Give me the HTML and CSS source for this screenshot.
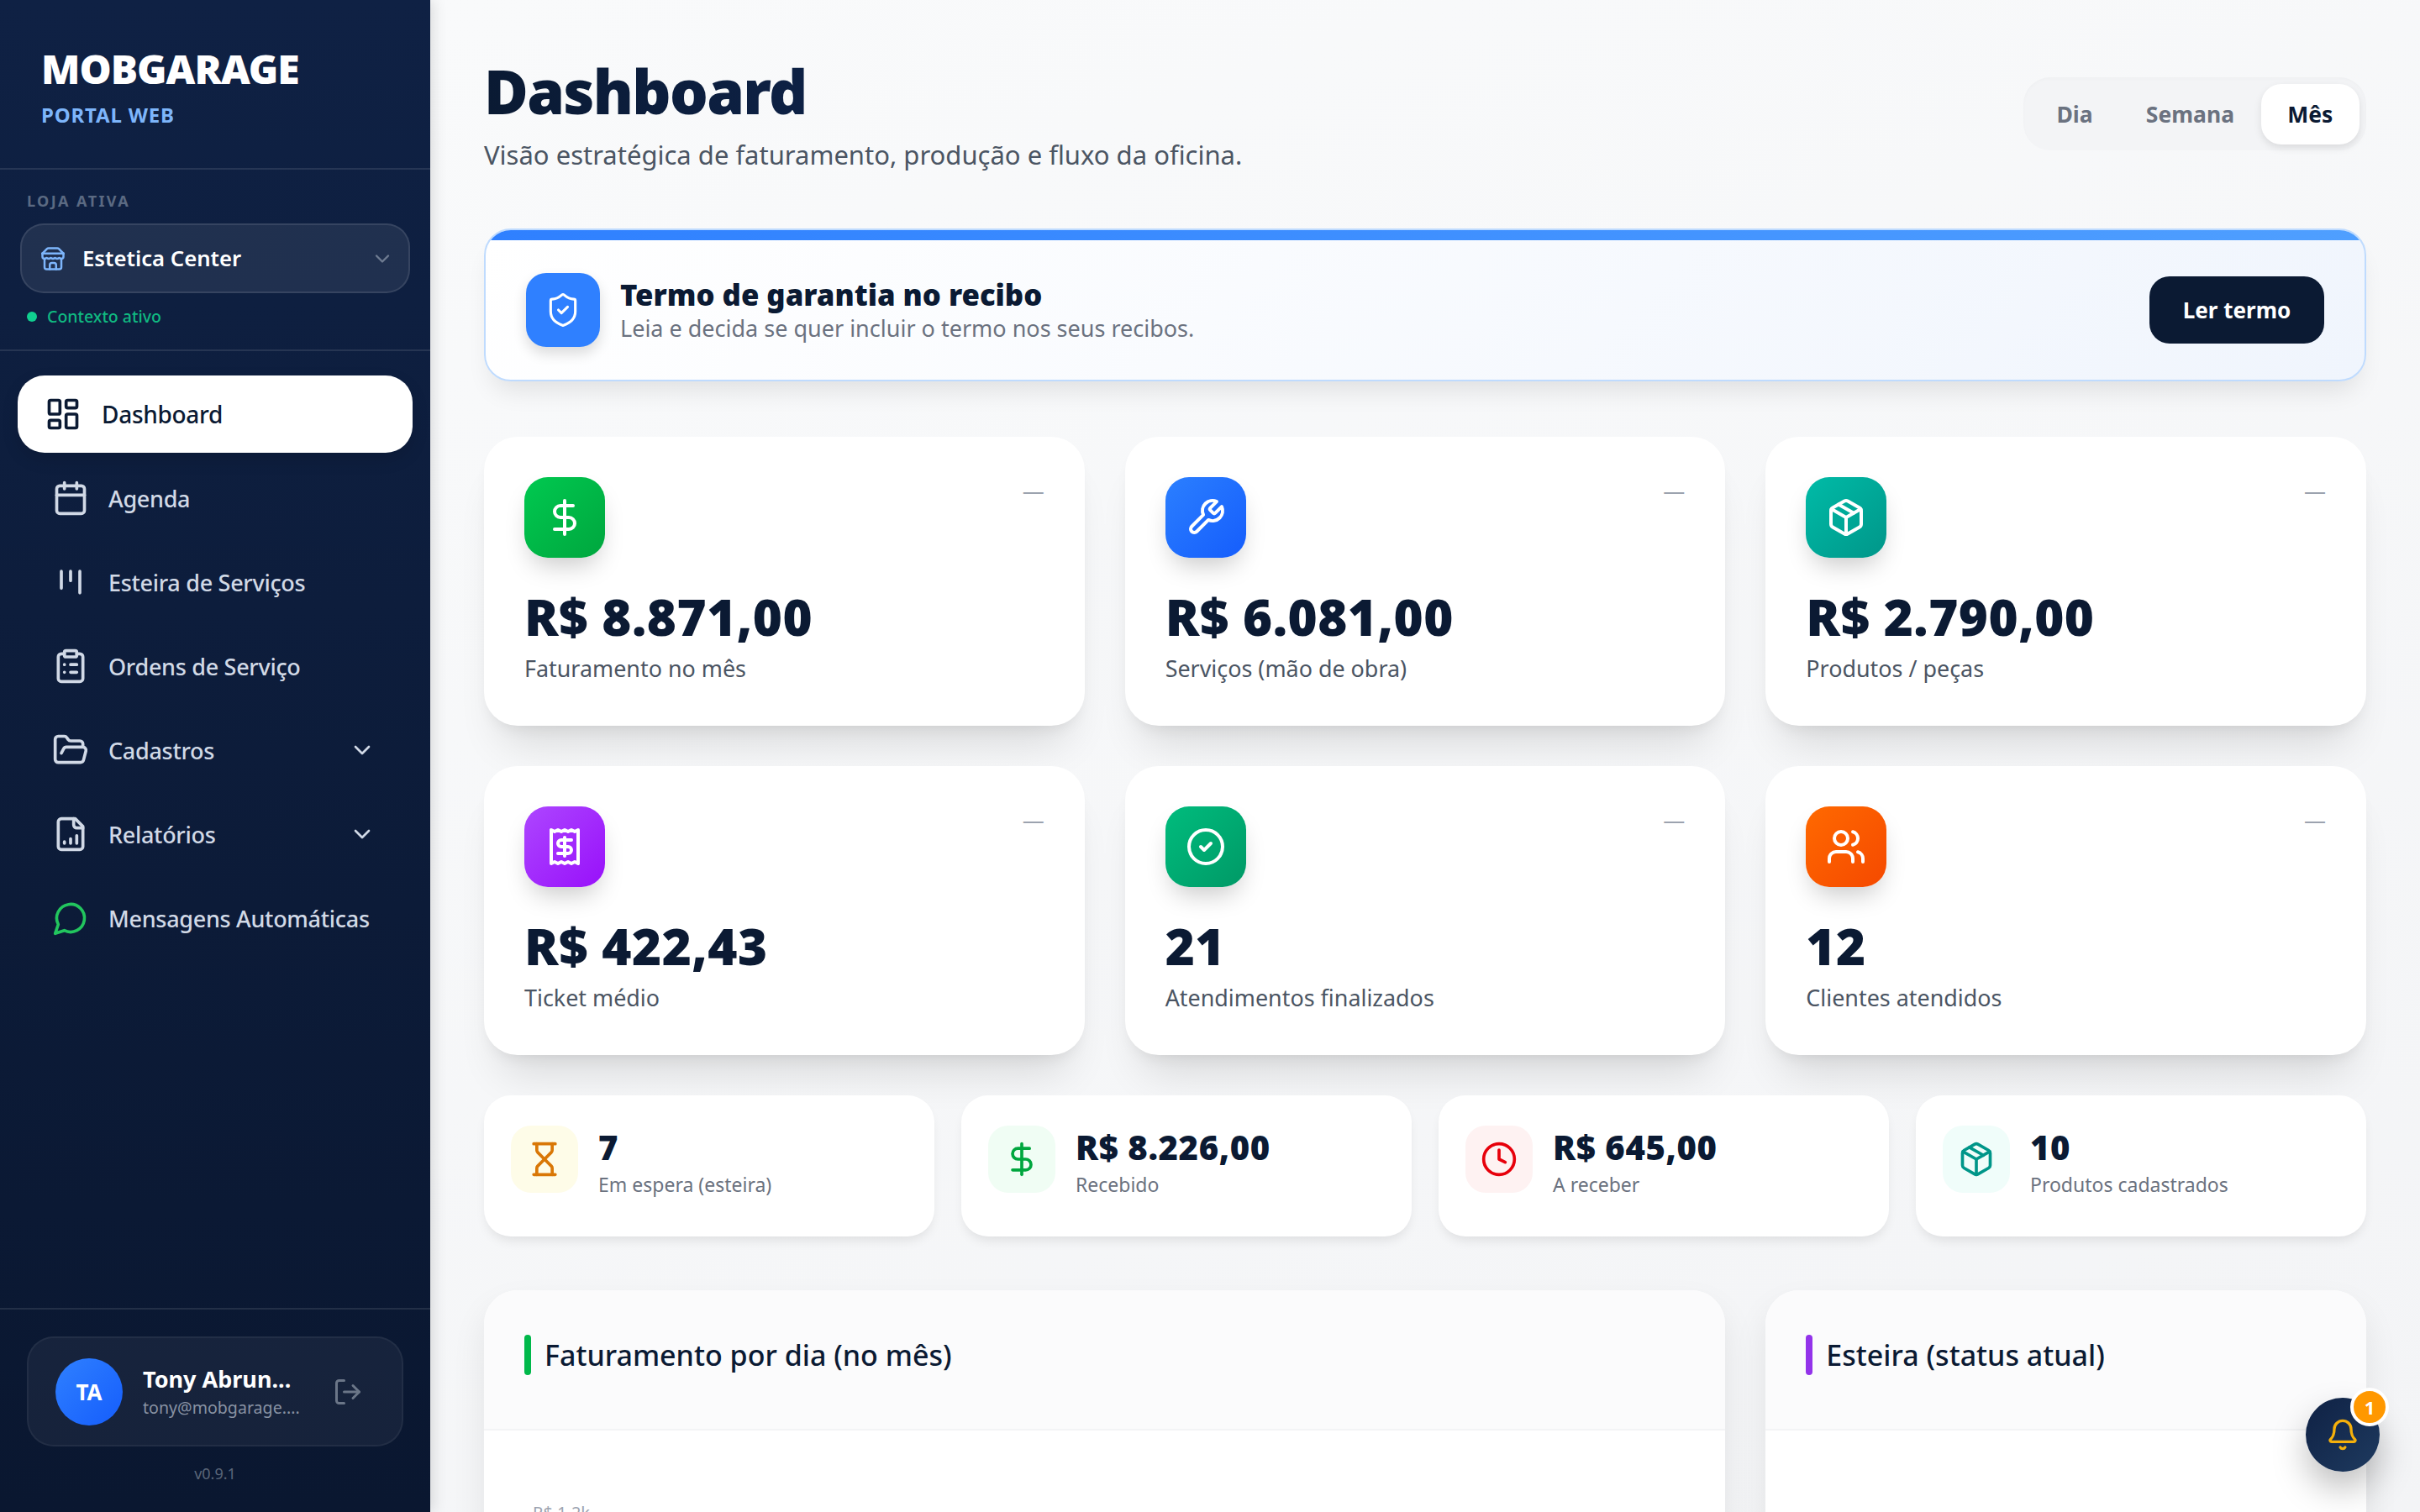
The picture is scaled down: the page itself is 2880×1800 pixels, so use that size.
FILE: index.html
```html
<!DOCTYPE html>
<html lang="pt-BR">
<head>
<meta charset="utf-8">
<title>MobGarage</title>
<link rel="stylesheet" href="styles.css">
</head>
<body>
<svg class="defs" width="0" height="0" aria-hidden="true">
  <symbol id="i-dashboard" viewBox="0 0 24 24"><rect x="3" y="3" width="7" height="9" rx="1"/><rect x="14" y="3" width="7" height="5" rx="1"/><rect x="14" y="12" width="7" height="9" rx="1"/><rect x="3" y="16" width="7" height="5" rx="1"/></symbol>
  <symbol id="i-calendar" viewBox="0 0 24 24"><path d="M8 2v4M16 2v4"/><rect x="3" y="4" width="18" height="18" rx="2"/><path d="M3 10h18"/></symbol>
  <symbol id="i-kanban" viewBox="0 0 24 24"><path d="M6 5v11M12 5v6M18 5v14"/></symbol>
  <symbol id="i-clipboard" viewBox="0 0 24 24"><rect x="8" y="2" width="8" height="4" rx="1"/><path d="M16 4h2a2 2 0 0 1 2 2v14a2 2 0 0 1-2 2H6a2 2 0 0 1-2-2V6a2 2 0 0 1 2-2h2"/><path d="M12 11h4M12 16h4M8 11h.01M8 16h.01"/></symbol>
  <symbol id="i-folder" viewBox="0 0 24 24"><path d="m6 14 1.5-2.9A2 2 0 0 1 9.24 10H20a2 2 0 0 1 1.94 2.5l-1.54 6a2 2 0 0 1-1.95 1.5H4a2 2 0 0 1-2-2V5a2 2 0 0 1 2-2h3.9a2 2 0 0 1 1.69.9l.81 1.2a2 2 0 0 0 1.67.9H18a2 2 0 0 1 2 2v2"/></symbol>
  <symbol id="i-report" viewBox="0 0 24 24"><path d="M15 2H6a2 2 0 0 0-2 2v16a2 2 0 0 0 2 2h12a2 2 0 0 0 2-2V7Z"/><path d="M14 2v4a2 2 0 0 0 2 2h4"/><path d="M8 18v-1M12 18v-3M16 18v-5"/></symbol>
  <symbol id="i-message" viewBox="0 0 24 24"><path d="M7.9 20A9 9 0 1 0 4 16.1L2 22Z"/></symbol>
  <symbol id="i-chevron" viewBox="0 0 24 24"><path d="m6 9 6 6 6-6"/></symbol>
  <symbol id="i-store" viewBox="0 0 24 24"><path d="m2 7 4.41-4.41A2 2 0 0 1 7.83 2h8.34a2 2 0 0 1 1.42.59L22 7"/><path d="M4 12v8a2 2 0 0 0 2 2h12a2 2 0 0 0 2-2v-8"/><path d="M15 22v-4a2 2 0 0 0-2-2h-2a2 2 0 0 0-2 2v4"/><path d="M2 7h20"/><path d="M22 7v3a2 2 0 0 1-2 2 2.7 2.7 0 0 1-1.59-.63.7.7 0 0 0-.82 0A2.7 2.7 0 0 1 16 12a2.7 2.7 0 0 1-1.59-.63.7.7 0 0 0-.82 0A2.7 2.7 0 0 1 12 12a2.7 2.7 0 0 1-1.59-.63.7.7 0 0 0-.82 0A2.7 2.7 0 0 1 8 12a2.7 2.7 0 0 1-1.59-.63.7.7 0 0 0-.82 0A2.7 2.7 0 0 1 4 12a2 2 0 0 1-2-2V7"/></symbol>
  <symbol id="i-logout" viewBox="0 0 24 24"><path d="M9 21H5a2 2 0 0 1-2-2V5a2 2 0 0 1 2-2h4"/><path d="m16 17 5-5-5-5"/><path d="M21 12H9"/></symbol>
  <symbol id="i-shield" viewBox="0 0 24 24"><path d="M20 13c0 5-3.5 7.5-7.66 8.95a1 1 0 0 1-.67-.01C7.5 20.5 4 18 4 13V6a1 1 0 0 1 1-1c2 0 4.5-1.2 6.24-2.72a1.17 1.17 0 0 1 1.52 0C14.51 3.81 17 5 19 5a1 1 0 0 1 1 1z"/><path d="m9 12 2 2 4-4"/></symbol>
  <symbol id="i-dollar" viewBox="0 0 24 24"><path d="M12 2v20"/><path d="M17 5H9.5a3.5 3.5 0 0 0 0 7h5a3.5 3.5 0 0 1 0 7H6"/></symbol>
  <symbol id="i-wrench" viewBox="0 0 24 24"><path d="M14.7 6.3a1 1 0 0 0 0 1.4l1.6 1.6a1 1 0 0 0 1.4 0l3.77-3.77a6 6 0 0 1-7.94 7.94l-6.91 6.91a2.12 2.12 0 0 1-3-3l6.91-6.91a6 6 0 0 1 7.94-7.94l-3.76 3.76z"/></symbol>
  <symbol id="i-package" viewBox="0 0 24 24"><path d="m7.5 4.27 9 5.15"/><path d="M21 8a2 2 0 0 0-1-1.73l-7-4a2 2 0 0 0-2 0l-7 4A2 2 0 0 0 3 8v8a2 2 0 0 0 1 1.73l7 4a2 2 0 0 0 2 0l7-4A2 2 0 0 0 21 16Z"/><path d="m3.3 7 8.7 5 8.7-5"/><path d="M12 22V12"/></symbol>
  <symbol id="i-receipt" viewBox="0 0 24 24"><path d="M4 2v20l2-1 2 1 2-1 2 1 2-1 2 1 2-1 2 1V2l-2 1-2-1-2 1-2-1-2 1-2-1-2 1Z"/><path d="M16 8h-6a2 2 0 1 0 0 4h4a2 2 0 1 1 0 4H8"/><path d="M12 17.5v-11"/></symbol>
  <symbol id="i-check" viewBox="0 0 24 24"><circle cx="12" cy="12" r="10"/><path d="m9 12 2 2 4-4"/></symbol>
  <symbol id="i-users" viewBox="0 0 24 24"><path d="M16 21v-2a4 4 0 0 0-4-4H6a4 4 0 0 0-4 4v2"/><circle cx="9" cy="7" r="4"/><path d="M22 21v-2a4 4 0 0 0-3-3.87"/><path d="M16 3.13a4 4 0 0 1 0 7.75"/></symbol>
  <symbol id="i-hourglass" viewBox="0 0 24 24"><path d="M5 22h14M5 2h14"/><path d="M17 22v-4.172a2 2 0 0 0-.586-1.414L12 12l-4.414 4.414A2 2 0 0 0 7 17.828V22"/><path d="M7 2v4.172a2 2 0 0 0 .586 1.414L12 12l4.414-4.414A2 2 0 0 0 17 6.172V2"/></symbol>
  <symbol id="i-clock" viewBox="0 0 24 24"><circle cx="12" cy="12" r="10"/><path d="M12 6v6l4 2"/></symbol>
  <symbol id="i-bell" viewBox="0 0 24 24"><path d="M10.268 21a2 2 0 0 0 3.464 0"/><path d="M3.262 15.326A1 1 0 0 0 4 17h16a1 1 0 0 0 .74-1.673C19.41 13.956 18 12.499 18 8A6 6 0 0 0 6 8c0 4.499-1.411 5.956-2.738 7.326"/></symbol>
</svg>

<div class="app">
  <aside class="sidebar">
    <div class="brand">
      <div class="brand-name">MOBGARAGE</div>
      <div class="brand-sub">PORTAL WEB</div>
    </div>
    <div class="store">
      <div class="store-label">LOJA ATIVA</div>
      <div class="store-select">
        <svg class="ico store-ico"><use href="#i-store"/></svg>
        <span class="store-name">Estetica Center</span>
        <svg class="ico store-chev"><use href="#i-chevron"/></svg>
      </div>
      <div class="store-status"><span class="dot"></span><span>Contexto ativo</span></div>
    </div>
    <nav class="nav">
      <a class="nav-item active"><svg class="ico nav-ico"><use href="#i-dashboard"/></svg><span>Dashboard</span></a>
      <a class="nav-item"><svg class="ico nav-ico"><use href="#i-calendar"/></svg><span>Agenda</span></a>
      <a class="nav-item"><svg class="ico nav-ico"><use href="#i-kanban"/></svg><span>Esteira de Serviços</span></a>
      <a class="nav-item"><svg class="ico nav-ico"><use href="#i-clipboard"/></svg><span>Ordens de Serviço</span></a>
      <a class="nav-item"><svg class="ico nav-ico"><use href="#i-folder"/></svg><span>Cadastros</span><svg class="ico nav-chev"><use href="#i-chevron"/></svg></a>
      <a class="nav-item"><svg class="ico nav-ico"><use href="#i-report"/></svg><span>Relatórios</span><svg class="ico nav-chev"><use href="#i-chevron"/></svg></a>
      <a class="nav-item"><svg class="ico nav-ico wa"><use href="#i-message"/></svg><span>Mensagens Automáticas</span></a>
    </nav>
    <div class="side-foot">
      <div class="user">
        <div class="avatar">TA</div>
        <div class="user-text">
          <div class="user-name">Tony Abrun...</div>
          <div class="user-mail">tony@mobgarage....</div>
        </div>
        <svg class="ico user-out"><use href="#i-logout"/></svg>
      </div>
      <div class="version">v0.9.1</div>
    </div>
  </aside>

  <main class="main">
    <header class="head">
      <div>
        <h1 class="title">Dashboard</h1>
        <p class="subtitle">Visão estratégica de faturamento, produção e fluxo da oficina.</p>
      </div>
      <div class="range">
        <span class="range-btn">Dia</span>
        <span class="range-btn">Semana</span>
        <span class="range-btn on">Mês</span>
      </div>
    </header>

    <section class="banner">
      <div class="banner-ico"><svg class="ico"><use href="#i-shield"/></svg></div>
      <div class="banner-text">
        <div class="banner-title">Termo de garantia no recibo</div>
        <div class="banner-sub">Leia e decida se quer incluir o termo nos seus recibos.</div>
      </div>
      <button class="banner-btn">Ler termo</button>
    </section>

    <section class="kpis">
      <article class="kpi">
        <div class="kpi-head"><div class="kpi-ico g-green"><svg class="ico"><use href="#i-dollar"/></svg></div><span class="trend">—</span></div>
        <div class="kpi-value">R$ 8.871,00</div>
        <div class="kpi-label">Faturamento no mês</div>
      </article>
      <article class="kpi">
        <div class="kpi-head"><div class="kpi-ico g-blue"><svg class="ico"><use href="#i-wrench"/></svg></div><span class="trend">—</span></div>
        <div class="kpi-value">R$ 6.081,00</div>
        <div class="kpi-label">Serviços (mão de obra)</div>
      </article>
      <article class="kpi">
        <div class="kpi-head"><div class="kpi-ico g-teal"><svg class="ico"><use href="#i-package"/></svg></div><span class="trend">—</span></div>
        <div class="kpi-value">R$ 2.790,00</div>
        <div class="kpi-label">Produtos / peças</div>
      </article>
      <article class="kpi">
        <div class="kpi-head"><div class="kpi-ico g-purple"><svg class="ico"><use href="#i-receipt"/></svg></div><span class="trend">—</span></div>
        <div class="kpi-value">R$ 422,43</div>
        <div class="kpi-label">Ticket médio</div>
      </article>
      <article class="kpi">
        <div class="kpi-head"><div class="kpi-ico g-emerald"><svg class="ico"><use href="#i-check"/></svg></div><span class="trend">—</span></div>
        <div class="kpi-value">21</div>
        <div class="kpi-label">Atendimentos finalizados</div>
      </article>
      <article class="kpi">
        <div class="kpi-head"><div class="kpi-ico g-orange"><svg class="ico"><use href="#i-users"/></svg></div><span class="trend">—</span></div>
        <div class="kpi-value">12</div>
        <div class="kpi-label">Clientes atendidos</div>
      </article>
    </section>

    <section class="stats">
      <article class="stat">
        <div class="stat-ico s-amber"><svg class="ico"><use href="#i-hourglass"/></svg></div>
        <div><div class="stat-value">7</div><div class="stat-label">Em espera (esteira)</div></div>
      </article>
      <article class="stat">
        <div class="stat-ico s-green"><svg class="ico"><use href="#i-dollar"/></svg></div>
        <div><div class="stat-value">R$ 8.226,00</div><div class="stat-label">Recebido</div></div>
      </article>
      <article class="stat">
        <div class="stat-ico s-red"><svg class="ico"><use href="#i-clock"/></svg></div>
        <div><div class="stat-value">R$ 645,00</div><div class="stat-label">A receber</div></div>
      </article>
      <article class="stat">
        <div class="stat-ico s-teal"><svg class="ico"><use href="#i-package"/></svg></div>
        <div><div class="stat-value">10</div><div class="stat-label">Produtos cadastrados</div></div>
      </article>
    </section>

    <section class="panels">
      <article class="panel">
        <div class="panel-head"><span class="accent a-green"></span><h2 class="panel-title">Faturamento por dia (no mês)</h2></div>
        <div class="panel-body"><span class="axis">R$ 1,2k</span></div>
      </article>
      <article class="panel">
        <div class="panel-head"><span class="accent a-purple"></span><h2 class="panel-title">Esteira (status atual)</h2></div>
        <div class="panel-body"></div>
      </article>
    </section>
  </main>
</div>

<button class="fab">
  <svg class="ico"><use href="#i-bell"/></svg>
  <span class="fab-badge">1</span>
</button>
</body>
</html>
```

FILE: styles.css
```css
* { box-sizing: border-box; }
html, body { margin: 0; height: 100%; overflow: hidden; }
body { font-family: "Noto Sans", "Open Sans", sans-serif; color: #0b1a33; background: #f5f6f8; }
.defs { position: absolute; }
.ico { fill: none; stroke: currentColor; stroke-width: 2; stroke-linecap: round; stroke-linejoin: round; display: block; flex: none; }

.app { display: flex; height: 1800px; }

/* sidebar */
.sidebar { width: 512px; flex: none; height: 1800px; display: flex; flex-direction: column; background: linear-gradient(180deg, #0f2144 0%, #0a1730 100%); box-shadow: 4px 0 16px rgba(0,0,0,.12); position: relative; z-index: 2; }
.brand { height: 202px; padding: 56px 0 0 49px; border-bottom: 2px solid rgba(255,255,255,.1); }
.brand-name { font-size: 48px; line-height: 52px; font-weight: 900; color: #fff; letter-spacing: -1px; }
.brand-sub { font-size: 24px; line-height: 32px; font-weight: 700; color: #7db5fb; letter-spacing: .8px; margin-top: 13px; }
.store { height: 216px; padding: 23px 24px 0; border-bottom: 2px solid rgba(255,255,255,.1); }
.store-label { font-size: 18px; line-height: 28px; font-weight: 700; letter-spacing: 2.4px; color: #5b6a82; padding-left: 8px; }
.store-select { margin-top: 13px; height: 83px; display: flex; align-items: center; padding: 0 17px 0 24px; border: 2px solid rgba(255,255,255,.1); border-radius: 28px; background: rgba(255,255,255,.08); }
.store-ico { width: 30px; height: 30px; color: #7db5fb; margin-left: -2px; }
.store-name { font-size: 25.7px; font-weight: 600; color: #fff; margin-left: 20px; flex: 1; }
.store-chev { width: 28px; height: 28px; color: #6f7c92; }
.store-status { display: flex; align-items: center; gap: 12px; margin-top: 14px; padding-left: 8px; font-size: 19.5px; line-height: 28px; font-weight: 500; color: #10b981; }
.dot { width: 12px; height: 12px; border-radius: 50%; background: #10d090; }
.nav { flex: 1; padding: 29px 24px 0; display: flex; flex-direction: column; gap: 8px; }
.nav-item { height: 92px; display: flex; align-items: center; gap: 23px; padding: 0 41px 0 38px; border-radius: 32px; font-size: 27px; letter-spacing: -.3px; font-weight: 500; color: #d1d9e6; }
.nav-item > span { flex: 1; white-space: nowrap; }
.nav-ico { width: 44px; height: 44px; }
.nav-ico.wa { color: #22c55e; }
.nav-chev { width: 32px; height: 32px; }
.nav-item.active { margin: 0 -3px; padding-left: 32px; gap: 24px; font-size: 28px; background: #fff; color: #0b1a33; box-shadow: 0 8px 20px rgba(0,0,0,.12); }
.side-foot { border-top: 2px solid rgba(255,255,255,.1); padding: 32px 32px 0; height: 243px; }
.user { height: 131px; display: flex; align-items: center; padding: 0 32px; border: 2px solid rgba(255,255,255,.05); border-radius: 32px; background: rgba(255,255,255,.05); }
.avatar { width: 80px; height: 80px; flex: none; border-radius: 50%; display: flex; align-items: center; justify-content: center; font-size: 26px; font-weight: 700; color: #fff; background: linear-gradient(135deg, #2f80ff, #155dfc); }
.user-text { flex: 1; margin-left: 24px; min-width: 0; }
.user-name { font-size: 27px; line-height: 38px; font-weight: 700; color: #fff; white-space: nowrap; }
.user-mail { font-size: 19.6px; line-height: 30px; color: #8892a3; white-space: nowrap; }
.user-out { width: 36px; height: 36px; color: #6b7688; margin-right: 14px; }
.version { text-align: center; font-size: 18px; line-height: 28px; color: #5b6678; margin-top: 18px; }

/* main */
.main { flex: 1; min-width: 0; height: 1800px; overflow: hidden; padding: 64px 64px 0; background: linear-gradient(160deg, #f9fafb 0%, #f3f4f6 100%); }
.head { display: flex; justify-content: space-between; align-items: flex-start; height: 208px; }
.title { margin: 0; font-size: 72px; line-height: 88px; font-weight: 900; letter-spacing: -1.7px; background: linear-gradient(90deg, #0a1a33, #122a5c); -webkit-background-clip: text; background-clip: text; color: transparent; }
.subtitle { margin: 11px 0 0; font-size: 31px; line-height: 42px; color: #4b5563; }
.range { margin-top: 28px; height: 87px; display: flex; align-items: center; padding: 8px; border-radius: 32px; background: #f3f4f6; box-shadow: inset 0 2px 4px rgba(0,0,0,.02); }
.range-btn { height: 72px; display: flex; align-items: center; padding: 0 31.6px; border-radius: 24px; font-size: 26.5px; font-weight: 700; color: #6b7280; }
.range-btn.on { color: #0b1a33; background: #fff; box-shadow: 0 4px 10px rgba(0,0,0,.1); }

.banner { height: 182px; display: flex; align-items: center; padding: 12px 48px 0; border: 2px solid #bfdbfe; border-radius: 32px; position: relative; overflow: hidden; background: linear-gradient(135deg, #fff 0%, #f0f5fd 100%); box-shadow: 0 20px 30px -10px rgba(0,0,0,.1); }
.banner::before { content: ""; position: absolute; inset: 0 0 auto 0; height: 12px; background: linear-gradient(90deg, #2f80ff, #4f9fff); }
.banner-ico { width: 88px; height: 88px; flex: none; border-radius: 24px; display: flex; align-items: center; justify-content: center; color: #fff; background: #2f80ff; box-shadow: 0 8px 16px rgba(0,0,0,.14); }
.banner-ico .ico { width: 44px; height: 44px; stroke-width: 1.7; }
.banner-text { flex: 1; margin-left: 24px; }
.banner-title { font-size: 34.7px; line-height: 44px; font-weight: 900; color: #0b1a33; }
.banner-sub { font-size: 27px; line-height: 36px; color: #6b7280; }
.banner-btn { width: 208px; height: 80px; border: 0; border-radius: 24px; background: #0b1a33; color: #fff; font: 700 26px "Noto Sans", sans-serif; }

.kpis { display: grid; grid-template-columns: repeat(3, 1fr); gap: 48px; margin-top: 66px; }
.kpi { height: 344px; padding: 48px; border-radius: 40px; background: #fff; box-shadow: 0 40px 50px -20px rgba(0,0,0,.12), 0 10px 20px -10px rgba(0,0,0,.1); }
.kpi-head { display: flex; justify-content: space-between; align-items: flex-start; }
.kpi-ico { width: 96px; height: 96px; border-radius: 28px; display: flex; align-items: center; justify-content: center; color: #fff; box-shadow: 0 16px 30px -8px rgba(0,0,0,.22); }
.kpi-ico .ico { width: 48px; height: 48px; }
.trend { font-size: 26px; line-height: 33px; color: #9ca3af; }
.g-green { background: linear-gradient(135deg, #00c950, #00a63e); }
.g-blue { background: linear-gradient(135deg, #2b7fff, #155dfc); }
.g-teal { background: linear-gradient(135deg, #00bba7, #009689); }
.g-purple { background: linear-gradient(135deg, #ad46ff, #9810fa); }
.g-emerald { background: linear-gradient(135deg, #00bc7d, #009966); }
.g-orange { background: linear-gradient(135deg, #ff6900, #f54900); }
.kpi-value { margin-top: 30px; font-size: 60px; line-height: 80px; font-weight: 900; letter-spacing: .5px; color: #0b1a33; white-space: nowrap; }
.kpi-label { margin-top: 2px; font-size: 26.9px; line-height: 40px; color: #4b5563; }

.stats { display: grid; grid-template-columns: repeat(4, 1fr); gap: 32px; margin-top: 48px; }
.stat { height: 168px; display: flex; align-items: flex-start; gap: 24px; padding: 36px 32px 0; border-radius: 32px; background: #fff; box-shadow: 0 8px 14px -4px rgba(0,0,0,.1); }
.stat-ico { width: 80px; height: 80px; flex: none; border-radius: 24px; display: flex; align-items: center; justify-content: center; }
.stat-ico .ico { width: 44px; height: 44px; }
.s-amber { background: #fefce8; color: #d97706; }
.s-green { background: #f0fdf4; color: #00a63e; }
.s-red { background: #fef2f2; color: #e7000b; }
.s-teal { background: #f0fdfa; color: #009689; }
.stat-value { font-size: 40px; line-height: 52px; font-weight: 900; letter-spacing: .6px; color: #0b1a33; white-space: nowrap; }
.stat-label { font-size: 23px; line-height: 32px; color: #6b7280; margin-top: 2px; }

.panels { display: grid; grid-template-columns: 1fr 1fr 1fr; gap: 48px; margin-top: 64px; }
.panel { border-radius: 40px 40px 0 0; background: #fff; overflow: hidden; height: 400px; box-shadow: 0 20px 40px rgba(0,0,0,.08); }
.panel:first-child { grid-column: span 2; }
.panel-head { height: 167px; display: flex; align-items: center; gap: 16px; padding: 0 48px 12px; background: #fbfbfc; border-bottom: 2px solid #f3f4f6; }
.accent { width: 8px; height: 48px; border-radius: 4px; flex: none; }
.a-green { background: #00b84a; }
.a-purple { background: #9333ea; }
.panel-title { margin: 0; font-size: 34px; line-height: 48px; font-weight: 500; color: #0b1a33; }
.panel-body { padding: 84px 58px 0; }
.axis { display: block; font-size: 20px; line-height: 28px; color: #9ca3af; }

.fab { position: absolute; left: 2744px; top: 1664px; width: 88px; height: 88px; border: 0; border-radius: 50%; z-index: 5; display: flex; align-items: center; justify-content: center; color: #f5b00b; background: linear-gradient(135deg, #0f2144, #1e3a5f); box-shadow: 0 20px 40px rgba(0,0,0,.25); }
.fab .ico { width: 40px; height: 40px; }
.fab-badge { position: absolute; top: -12px; right: -11px; width: 46px; height: 46px; border: 4px solid #fff; border-radius: 50%; display: flex; align-items: center; justify-content: center; background: #ff9800; color: #fff; font: 700 22px "Noto Sans", sans-serif; }
```
